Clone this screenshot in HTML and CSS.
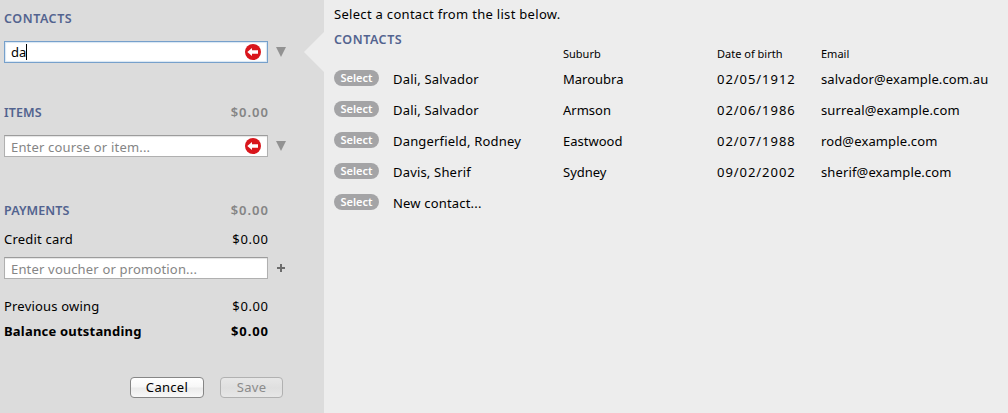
FILE: index.html
```html
<!DOCTYPE html>
<html lang="en">
<head>
<meta charset="utf-8">
<title>Contacts</title>
<link rel="stylesheet" href="styles.css">
</head>
<body>
<div class="app">
  <aside class="sidebar">
    <div class="row row-contacts"><h2 class="heading">CONTACTS</h2></div>
    <div class="field-row">
      <div class="field field-focus"><span class="typed">da</span><i class="caret"></i>
        <svg class="badge" viewBox="0 0 16 16"><circle cx="8" cy="8" r="8" fill="#d9161c"/><path d="M2.3 8L7 4V6.3H13V9.8H7V12Z" fill="#fff"/></svg>
      </div>
      <svg class="arrow" viewBox="0 0 10 10"><path d="M0 0H10L5 10Z" fill="#929292"/></svg>
    </div>
    <div class="row row-items"><h2 class="heading items">ITEMS</h2><span class="sum">$0.00</span></div>
    <div class="field-row">
      <div class="field"><span class="hint">Enter course or item...</span>
        <svg class="badge" viewBox="0 0 16 16"><circle cx="8" cy="8" r="8" fill="#d9161c"/><path d="M2.3 8L7 4V6.3H13V9.8H7V12Z" fill="#fff"/></svg>
      </div>
      <svg class="arrow" viewBox="0 0 10 10"><path d="M0 0H10L5 10Z" fill="#929292"/></svg>
    </div>
    <div class="row row-payments"><h2 class="heading payments">PAYMENTS</h2><span class="sum">$0.00</span></div>
    <div class="row row-credit"><span class="credit">Credit card</span><span class="amount">$0.00</span></div>
    <div class="field-row">
      <div class="field"><span class="hint voucher">Enter voucher or promotion...</span></div>
      <svg class="plus" viewBox="0 0 8 8"><path d="M3 0H5V3H8V5H5V8H3V5H0V3H3Z" fill="#6c6c6c"/></svg>
    </div>
    <div class="row row-owing"><span class="owing">Previous owing</span><span class="amount">$0.00</span></div>
    <div class="row row-balance"><span class="balance">Balance outstanding</span><span class="total">$0.00</span></div>
    <div class="buttons"><button class="button cancel">Cancel</button><button class="button save" disabled>Save</button></div>
    <i class="pointer"></i>
  </aside>
  <main class="main">
    <p class="intro">Select a contact from the list below.</p>
    <h2 class="heading list-heading">CONTACTS</h2>
    <div class="grid labels"><span></span><span></span><span>Suburb</span><span>Date of birth</span><span>Email</span></div>
    <div class="grid"><span class="pill">Select</span><span class="name">Dali, Salvador</span><span>Maroubra</span><span class="date">02/05/1912</span><span class="email">salvador@example.com.au</span></div>
    <div class="grid"><span class="pill">Select</span><span class="name">Dali, Salvador</span><span>Armson</span><span class="date">02/06/1986</span><span class="email">surreal@example.com</span></div>
    <div class="grid"><span class="pill">Select</span><span class="name">Dangerfield, Rodney</span><span>Eastwood</span><span class="date">02/07/1988</span><span class="email">rod@example.com</span></div>
    <div class="grid"><span class="pill">Select</span><span class="name">Davis, Sherif</span><span>Sydney</span><span class="date">09/02/2002</span><span class="email">sherif@example.com</span></div>
    <div class="grid"><span class="pill">Select</span><span class="name">New contact...</span></div>
  </main>
</div>
</body>
</html>
```
FILE: styles.css
```css
* { box-sizing: border-box; }
body {
  margin: 0;
  font: 13px/18px "Noto Sans", "Open Sans", sans-serif;
  color: #000;
  background: #ededed;
  white-space: nowrap;
}
.app { display: flex; width: 1008px; height: 413px; overflow: hidden; }
.sidebar {
  position: relative;
  flex: none;
  width: 324px;
  height: 413px;
  padding: 9px 0 0 4px;
  background: #dcdcdc;
}
.row { display: flex; justify-content: space-between; width: 264px; height: 18px; }
.heading {
  margin: 0;
  padding-top: 1px;
  font-size: 12.5px;
  font-weight: 600;
  line-height: 18px;
  color: #52638f;
  letter-spacing: 0.55px;
}
.items, .payments { letter-spacing: 0.1px; }
.row-contacts { margin-bottom: 14px; }
.row-items { margin: 40px 0 14px; }
.row-payments { margin-top: 44px; }
.row-credit { margin: 11px 0 9px; }
.row-owing { margin-top: 18px; }
.row-balance { margin-top: 7px; }
.sum { font-weight: 600; color: #858585; letter-spacing: 1px; margin-right: -1px; }
.total { font-weight: 700; letter-spacing: 0.9px; margin-right: -0.9px; }
.amount { letter-spacing: 0.6px; margin-right: -0.6px; }
.balance { font-weight: 700; letter-spacing: 0.2px; }
.credit, .owing { letter-spacing: 0.2px; }
.field-row { display: flex; align-items: center; height: 22px; }
.field {
  display: flex;
  align-items: center;
  width: 264px;
  height: 22px;
  padding: 0 6px;
  border: 1px solid #b0b0b0;
  border-top-color: #9c9c9c;
  background: #fff;
  box-shadow: inset 0 1px 1px #e4e4e4;
}
.field-focus { border-color: #76a0cb; box-shadow: inset 0 0 1px 1px #d8e6f3; }
.hint { padding-top: 1px; color: #858585; letter-spacing: 0.18px; }
.caret { width: 1px; height: 16px; background: #000; }
.badge { width: 16px; height: 16px; margin-left: auto; }
.arrow { width: 10px; height: 10px; margin-left: 8px; }
.plus { width: 8px; height: 8px; margin-left: 9px; }
.buttons { display: flex; gap: 16px; margin: 37px 0 0 126px; }
.button {
  height: 21px;
  padding: 0 0 1px;
  border: 1px solid #868686;
  border-radius: 4px;
  font: 13px/18px "Noto Sans", sans-serif;
  color: #000;
  letter-spacing: 0.3px;
  background: linear-gradient(#fff 0%, #f7f7f7 48%, #ebebeb 52%, #f8f8f8 100%);
}
.cancel { width: 74px; }
.save { width: 63px; color: #8b8b8b; border-color: #b1b1b1; background: linear-gradient(#e7e7e7, #dfdfdf 52%, #e7e7e7); }
.pointer {
  position: absolute;
  top: 32px;
  right: 0;
  border: 20px solid transparent;
  border-right-color: #ededed;
  border-left: 0;
}
.main { flex: 1; padding: 5px 0 0 10px; }
.intro { margin: 0 0 7px; letter-spacing: 0.3px; }
.grid {
  display: grid;
  grid-template-columns: 59px 170px 154px 104px 1fr;
  height: 31px;
}
.labels { height: 25px; margin-top: -4px; font-size: 11px; }
.pill {
  width: 45px;
  height: 16px;
  border-radius: 8px;
  background: #a4a4a6;
  color: #fff;
  font-size: 11px;
  font-weight: 600;
  line-height: 16px;
  text-align: center;
}
.name { letter-spacing: 0.18px; }
.date { letter-spacing: 0.95px; }
.email { letter-spacing: 0.13px; }
```
